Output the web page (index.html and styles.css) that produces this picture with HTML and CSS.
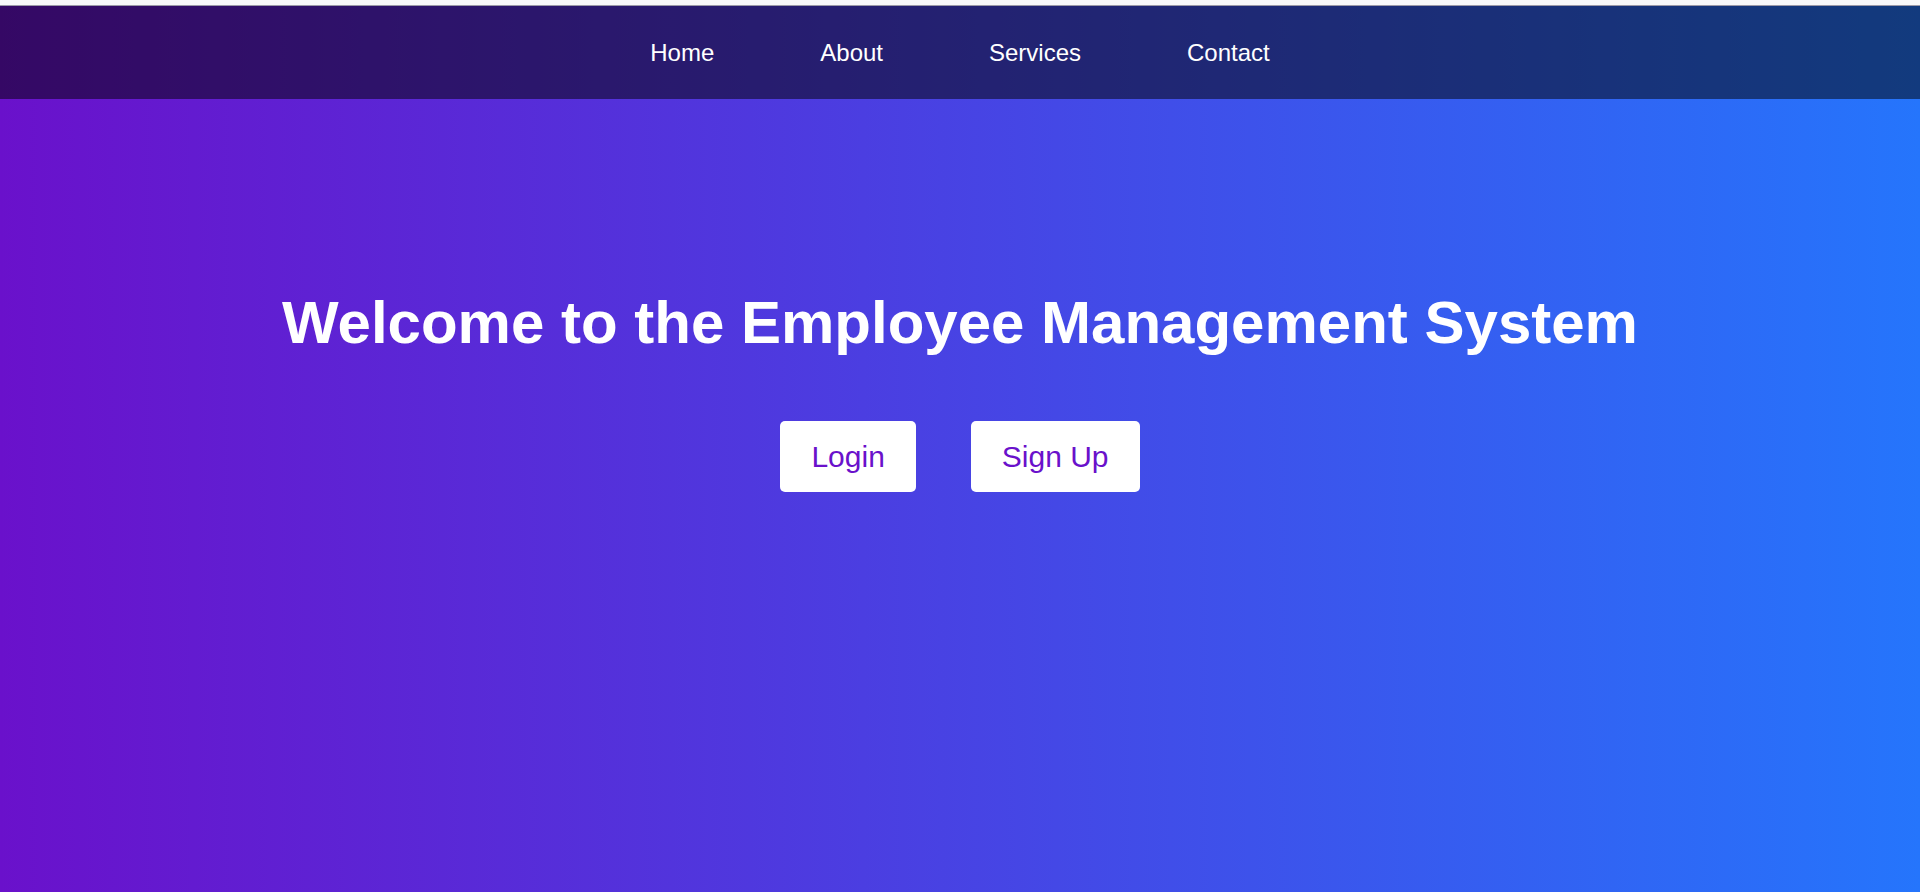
FILE: index.html
```html
<!DOCTYPE html>
<html lang="en">
<head>
<meta charset="UTF-8">
<title>Employee Management System</title>
<link rel="stylesheet" href="styles.css">
</head>
<body>
<div class="topstrip"></div>
<div class="page">
  <nav class="nav">
    <a href="#" class="nav-link">Home</a>
    <a href="#" class="nav-link">About</a>
    <a href="#" class="nav-link">Services</a>
    <a href="#" class="nav-link">Contact</a>
  </nav>
  <main class="hero">
    <h1 class="hero-title">Welcome to the Employee Management System</h1>
    <div class="hero-actions">
      <a href="#" class="btn">Login</a>
      <a href="#" class="btn">Sign Up</a>
    </div>
  </main>
</div>
</body>
</html>
```
FILE: styles.css
```css
html, body {
  margin: 0;
  padding: 0;
  height: 100%;
}
body {
  font-family: "Liberation Sans", Arial, sans-serif;
  display: flex;
  flex-direction: column;
  overflow: hidden;
}
.topstrip {
  height: 5px;
  background: #f8f8fa;
  border-bottom: 1px solid #9c9aa8;
  flex: none;
}
.page {
  flex: 1;
  background: linear-gradient(to right, #6a11cb, #2575fc);
  display: flex;
  flex-direction: column;
}
.nav {
  height: 93px;
  background: rgba(0, 0, 0, 0.5);
  display: flex;
  justify-content: center;
  align-items: center;
  gap: 106px;
}
.nav-link {
  color: #ffffff;
  text-decoration: none;
  font-size: 24px;
}
.hero {
  display: flex;
  flex-direction: column;
  align-items: center;
  padding-top: 190px;
}
.hero-title {
  margin: 0;
  color: #ffffff;
  font-size: 60px;
  font-weight: bold;
  line-height: 67px;
}
.hero-actions {
  margin-top: 65px;
  display: flex;
  gap: 55px;
}
.btn {
  display: block;
  background: #ffffff;
  color: #6a11cb;
  text-decoration: none;
  font-size: 30px;
  line-height: 33px;
  padding: 19px 31px;
  border-radius: 5px;
}
```
